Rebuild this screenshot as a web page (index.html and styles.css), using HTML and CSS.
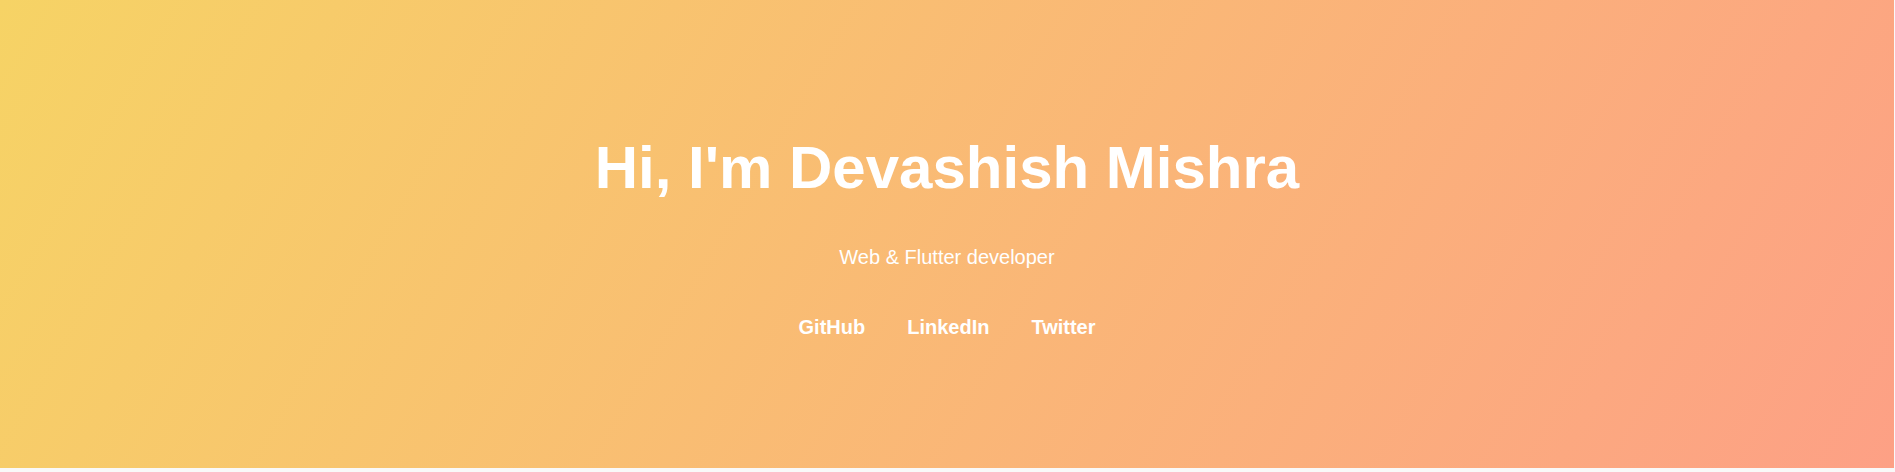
FILE: index.html
```html
<!DOCTYPE html>
<html lang="en">
<head>
<meta charset="utf-8">
<title>Devashish Mishra</title>
<link rel="stylesheet" href="styles.css">
</head>
<body>
<section class="hero">
  <h1 class="hero-title">Hi, I'm Devashish Mishra</h1>
  <p class="hero-subtitle">Web &amp; Flutter developer</p>
  <nav class="hero-links">
    <a href="#" class="hero-link">GitHub</a>
    <a href="#" class="hero-link">LinkedIn</a>
    <a href="#" class="hero-link">Twitter</a>
  </nav>
</section>
</body>
</html>
```
FILE: styles.css
```css
html, body {
  margin: 0;
  padding: 0;
}
body {
  background: #f9f9f9;
  font-family: "Liberation Sans", Arial, sans-serif;
}
.hero {
  height: 468px;
  margin-right: 1px;
  box-sizing: border-box;
  padding-top: 4px;
  display: flex;
  flex-direction: column;
  align-items: center;
  justify-content: center;
  background: linear-gradient(120deg, #f6d365 0%, #fda085 100%);
  color: #fff;
  text-align: center;
}
.hero-title {
  margin: 0 0 44px;
  font-size: 60px;
  font-weight: 700;
}
.hero-subtitle {
  margin: 0 0 47px;
  font-size: 20px;
}
.hero-links {
  display: flex;
  gap: 42px;
}
.hero-link {
  color: #fff;
  text-decoration: none;
  font-weight: 700;
  font-size: 20px;
}
```
